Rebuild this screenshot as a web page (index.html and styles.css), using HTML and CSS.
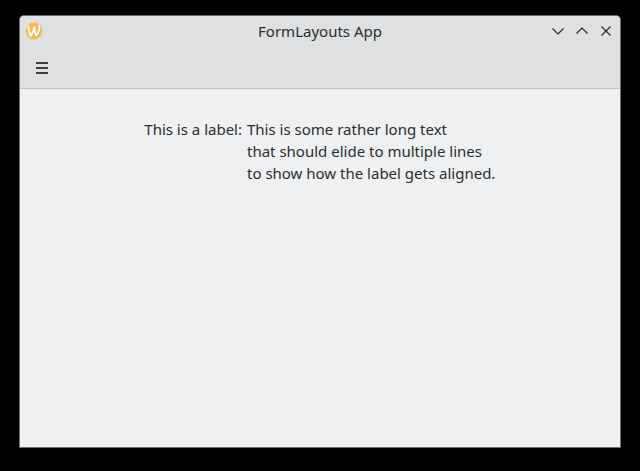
FILE: index.html
```html
<!DOCTYPE html>
<html lang="en">
<head>
<meta charset="utf-8">
<title>FormLayouts App</title>
<link rel="stylesheet" href="styles.css">
</head>
<body>
<main class="window">
  <header class="header">
    <div class="titlebar">
      <svg class="app-icon" viewBox="0 0 18 18" aria-hidden="true">
        <circle cx="9" cy="9" r="8.400" fill="#f9b954"/>
        <path d="M3.200 4.500C3.600 8 4.300 11 5.700 14 7.500 11.500 8.800 9 9.400 5 9.400 8.500 9.900 11 11.200 13.400 13.400 11 14.800 7.500 14.300 3.600" fill="none" stroke="#fff" stroke-width="1.700" stroke-linecap="round" stroke-linejoin="round"/>
      </svg>
      <h1 class="title">FormLayouts App</h1>
      <div class="controls">
        <svg viewBox="0 0 18 18"><path d="M3.500 6.500 9 12l5.500-5.500"/></svg>
        <svg viewBox="0 0 18 18"><path d="M3.500 11.500 9 6l5.500 5.500"/></svg>
        <svg viewBox="0 0 18 18"><path d="m4.500 4.500 9 9m0-9-9 9"/></svg>
      </div>
    </div>
    <div class="toolbar">
      <svg class="menu" viewBox="0 0 12 12"><path d="M0 1h12M0 6h12M0 11h12"/></svg>
    </div>
  </header>
  <section class="form">
    <div class="label">This is a label:</div>
    <div class="value">This is some rather long text<br>that should elide to multiple lines<br>to show how the label gets aligned.</div>
  </section>
</main>
</body>
</html>
```
FILE: styles.css
```css
* { box-sizing: border-box; }
body {
  margin: 0;
  height: 471px;
  padding: 15px 19px 23px;
  background: #000;
  color: #2a2d30;
  font: 15px/22px "Noto Sans", sans-serif;
  overflow: hidden;
}
.window {
  height: 433px;
  border: 1px solid #6b6c6e;
  border-radius: 5px 5px 0 0;
  background: #eff0f1;
  overflow: hidden;
}
.header {
  height: 73px;
  background: #dee0e2;
  border-bottom: 1px solid #c0c2c4;
}
.titlebar {
  display: grid;
  grid-template-columns: 1fr auto 1fr;
  align-items: center;
  height: 30px;
  padding: 0 5px;
}
.app-icon { width: 18px; height: 18px; }
.title { margin: 0; font-size: 15px; font-weight: 400; line-height: 22px; }
.controls { display: flex; justify-content: flex-end; gap: 6px; }
.controls svg {
  width: 18px;
  height: 18px;
  fill: none;
  stroke: #232629;
  stroke-width: 1.1;
}
.toolbar { display: flex; padding: 16px; }
.menu { width: 12px; height: 12px; stroke: #3c3f42; stroke-width: 2; }
.form {
  display: grid;
  grid-template-columns: 222px auto;
  column-gap: 5px;
  padding-top: 29px;
}
.label { text-align: right; }
.label, .value { white-space: nowrap; }
```
